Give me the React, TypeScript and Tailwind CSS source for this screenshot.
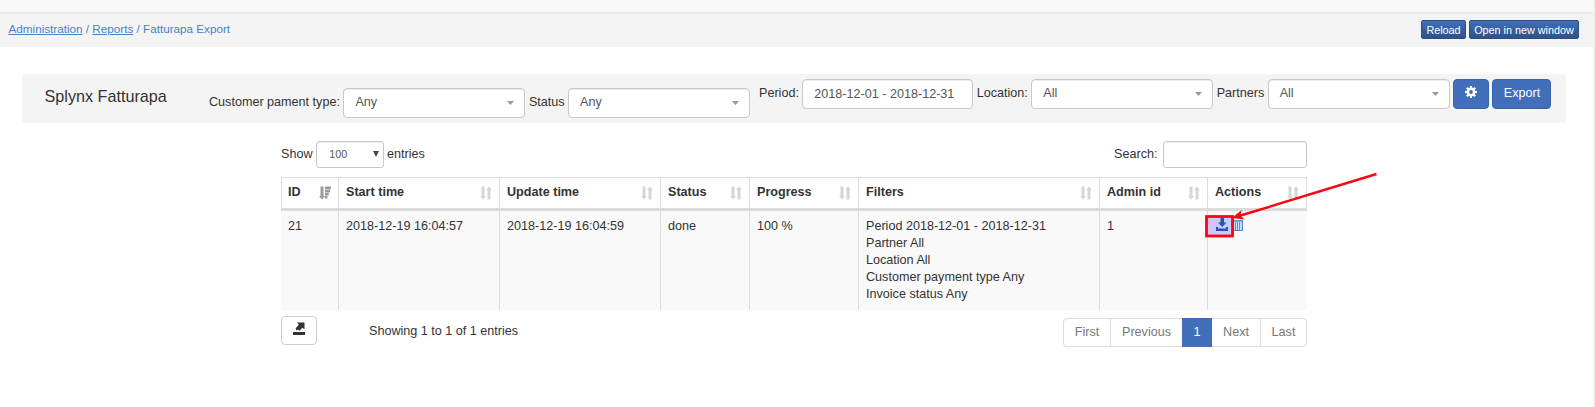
import type { ReactNode } from "react";

function Select({ label, value }: { label: string; value: string }) {
  return (
    <>
      <span className="pb-px">{label}</span>
      <div className="flex h-[30px] w-[182px] shrink-0 items-center justify-between rounded-[4px] border border-[#c8c8c8] bg-white pl-[11px] pr-[10px] pb-px text-[#555] shadow-[inset_0_1px_1px_rgba(0,0,0,0.075)]">
        <span>{value}</span>
        <svg className="mt-px" width="7" height="4" viewBox="0 0 7 4"><path d="M0 0h7L3.5 4z" fill="#999" /></svg>
      </div>
    </>
  );
}

function SortIcon() {
  return (
    <svg width="12" height="14" viewBox="0 0 12 14" fill="#d6d6d6">
      <path d="M1.500 0.500h3v9.500h1.500L3 13.500 0 10h1.500z" />
      <path d="M7.500 13.500h3V4H12L9 0.500 6 4h1.500z" />
    </svg>
  );
}

function SortDescIcon() {
  return (
    <svg width="12" height="14" viewBox="0 0 12 14" fill="#999">
      <path d="M1.500 0.500h3v9.500h1.500L3 13.500 0 10h1.500z" />
      <path d="M6 0.500H12v2.700H6zM6 3.700H11v2.700H6zM6 6.900H9.700v2.700H6zM6 10.100H8.500V12.500H6z" />
    </svg>
  );
}

function SmallButton({ children, width }: { children: ReactNode; width: string }) {
  return (
    <button className={`${width} h-[19px] rounded-[2px] border border-[#2b4d80] bg-linear-to-b from-[#416fba] to-[#2e5289] text-[10.8px] leading-[18px] whitespace-nowrap text-white`}>
      {children}
    </button>
  );
}

const columns = [
  { title: "ID", width: "w-[57px]" },
  { title: "Start time", width: "w-[161px]" },
  { title: "Update time", width: "w-[161px]" },
  { title: "Status", width: "w-[89px]" },
  { title: "Progress", width: "w-[109px]" },
  { title: "Filters", width: "w-[241px]" },
  { title: "Admin id", width: "w-[108px]" },
  { title: "Actions", width: "w-[100px]" },
];

const row = ["21", "2018-12-19 16:04:57", "2018-12-19 16:04:59", "done", "100 %"];

const filters = [
  "Period 2018-12-01 - 2018-12-31",
  "Partner All",
  "Location All",
  "Customer payment type Any",
  "Invoice status Any",
];

const cell = "border-l border-[#dcdcdc] px-[7px] pt-[7px] align-top";

export default function App() {
  return (
    <div className="h-[407px] overflow-hidden border-r-2 border-[#f0f0f0] bg-white font-['Liberation_Sans',Arial,sans-serif] text-[12.6px] leading-[17px] text-[#333]">
      <div className="h-3 bg-[#f9f9f9]" />
      <header className="flex h-[35px] justify-between border-t border-[#e6e6e6] bg-[#f4f4f4] pr-[14px] pl-[8.500px] shadow-[inset_0_2px_2px_-1px_rgba(0,0,0,0.04)]">
        <nav className="pt-[8px] text-[11.7px] leading-[16px] text-[#4a80cf]">
          <a className="underline">Administration</a> / <a className="underline">Reports</a> / Fatturapa Export
        </nav>
        <div className="flex gap-[3px] pt-[7px]">
          <SmallButton width="w-[45px]">Reload</SmallButton>
          <SmallButton width="w-[110px]">Open in new window</SmallButton>
        </div>
      </header>

      <section className="mt-[27px] ml-[22px] flex h-[49px] w-[1544px] items-start rounded-[4px] bg-[#f4f4f4] pl-[22.500px]">
        <h1 className="w-[164.500px] pt-[12px] text-[16.2px] leading-[20px]">Splynx Fatturapa</h1>
        <div className="flex w-[550px] items-center gap-[3.500px] pt-[14px]">
          <Select label="Customer pament type:" value="Any" />
          <Select label="Status" value="Any" />
        </div>
        <div className="flex items-center gap-[3.420px] pt-[5px]">
          <span className="pb-px">Period:</span>
          <div className="flex h-[30px] w-[171px] items-center rounded-[4px] border border-[#c8c8c8] bg-white pt-px pl-[11px] text-[#555] shadow-[inset_0_1px_1px_rgba(0,0,0,0.075)]">2018-12-01 - 2018-12-31</div>
          <Select label="Location:" value="All" />
          <Select label="Partners" value="All" />
          <button className="flex h-[30px] w-9 items-center justify-center rounded-[4px] border border-[#3a64a8] bg-[#426fba] pb-[4px]" aria-label="Settings">
            <svg width="12" height="12" viewBox="0 0 12 12">
              <g fill="#fff">
                <path d="M4.900 0h2.200v12H4.900z" />
                <path d="M4.900 0h2.200v12H4.900z" transform="rotate(45 6 6)" />
                <path d="M4.900 0h2.200v12H4.900z" transform="rotate(90 6 6)" />
                <path d="M4.900 0h2.200v12H4.900z" transform="rotate(135 6 6)" />
                <circle cx="6" cy="6" r="4.400" />
              </g>
              <circle cx="6" cy="6" r="1.900" fill="#426fba" />
            </svg>
          </button>
          <button className="h-[30px] w-[59px] rounded-[4px] border border-[#3a64a8] bg-[#426fba] pb-px text-white">Export</button>
        </div>
      </section>

      <main className="relative ml-[281px] w-[1026px] pt-[18px]">
        <div className="flex h-[27px] items-center justify-between">
          <div className="flex items-center gap-[3.300px]">
            <span>Show</span>
            <div className="flex h-[27px] w-[68px] items-center justify-between rounded-[3px] border border-[#c8c8c8] pr-[4px] pl-[12.500px] text-[10.8px] text-[#555] shadow-[inset_0_1px_1px_rgba(0,0,0,0.075)]">
              100
              <svg className="-mt-[2px]" width="6" height="6" viewBox="0 0 6 6"><path d="M0 0h6L3 6z" fill="#444" /></svg>
            </div>
            <span>entries</span>
          </div>
          <div className="flex items-center gap-[5.500px]">
            <span>Search:</span>
            <div className="h-[27px] w-[144px] rounded-[3px] border border-[#c8c8c8] shadow-[inset_0_1px_1px_rgba(0,0,0,0.075)]" />
          </div>
        </div>

        <table className="mt-[9px] w-[1026px] table-fixed border-separate border-spacing-0">
          <thead>
            <tr className="h-[34px]">
              {columns.map((column, i) => (
                <th key={column.title} className={`${column.width} border-t border-b-3 border-l border-[#dcdcdc] px-[7px] text-left align-top first:pl-[6px] last:border-r`}>
                  <div className="flex items-start justify-between pt-[6px]">
                    <span>{column.title}</span>
                    <span className="pt-[2px]">{i === 0 ? <SortDescIcon /> : <SortIcon />}</span>
                  </div>
                </th>
              ))}
            </tr>
          </thead>
          <tbody>
            <tr className="h-[99px] bg-[#f9f9f9]">
              {row.map((value, i) => (
                <td key={i} className={`${cell} first:border-[#f9f9f9] first:pl-[6px]`}>{value}</td>
              ))}
              <td className={cell}>{filters.map((line) => <div key={line}>{line}</div>)}</td>
              <td className={cell}>1</td>
              <td className={cell}>
                <div className="flex items-center gap-[5px] pl-[1px]">
                  <svg width="12" height="13" viewBox="0 0 12 13" fill="#1c50b0">
                    <path d="M4.500 0h3.500v4.500H10.500L6.250 9 2 4.500h2.500zM0 9h2v1.500h8V9h2v4H0z" />
                  </svg>
                  <svg width="10" height="12" viewBox="0 0 10 12" fill="none">
                    <path d="M0.500 2h9v9.500h-9z" fill="#c4dcf6" stroke="#4a80cf" />
                    <path d="M0 1.500h10M2.500 3v8M4.500 3v8M6.500 3v8" stroke="#5c95dc" />
                  </svg>
                </div>
              </td>
            </tr>
          </tbody>
        </table>

        <footer className="flex items-start pt-[6px]">
          <button className="flex h-[29px] w-9 items-start justify-center rounded-[4px] border border-[#ccc] pt-[5px]" aria-label="Export table">
            <svg width="12" height="14" viewBox="0 0 12 14" fill="#333">
              <path d="M4 0.500h7.500v7L9.500 5.800 6.500 8.800 5 7.500 3.500 8.500 2.500 6.500 5.800 2.700zM0 10h12v3H0z" />
            </svg>
          </button>
          <span className="pt-[7px] pl-[52px]">Showing 1 to 1 of 1 entries</span>
          <div className="mt-[2px] ml-auto flex h-[29px] w-[244px] rounded-[4px] border border-[#dcdcdc] text-center leading-[26px] text-[#777]">
            <span className="w-[46px]">First</span>
            <span className="w-[72px] border-l border-[#dcdcdc]">Previous</span>
            <span className="-my-px w-[30px] bg-[#426fba] pt-px text-white">1</span>
            <span className="w-[48px]">Next</span>
            <span className="w-[46px] border-l border-[#dcdcdc]">Last</span>
          </div>
        </footer>

        <svg className="pointer-events-none absolute top-[48px] left-[920px]" width="180" height="70" viewBox="0 0 180 70">
          <rect x="5.500" y="45.500" width="26" height="19.500" fill="#5050ff" fillOpacity="0.280" stroke="#fb0515" strokeWidth="2.800" />
          <path d="M175.500 3L38 45" stroke="#fb0515" strokeWidth="2.400" />
          <path d="M31 47L40.500 39 39.500 44.500 43.500 48.500z" fill="#fb0515" />
        </svg>
      </main>
    </div>
  );
}
